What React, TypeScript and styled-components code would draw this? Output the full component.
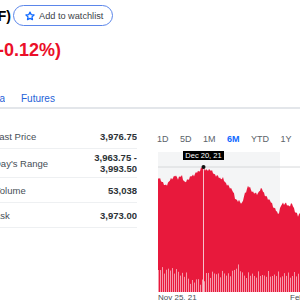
import React from "react";
import styled, { createGlobalStyle } from "styled-components";

const GlobalStyle = createGlobalStyle`
  html, body { margin: 0; padding: 0; background: #fff; }
  body { overflow: hidden; font-family: "Liberation Sans", Arial, sans-serif; }
`;

const Page = styled.div`
  width: 300px;
  height: 300px;
  overflow: hidden;
  display: flex;
  flex-direction: column;
`;

const TitleRow = styled.div`
  display: flex;
  align-items: center;
  height: 21px;
  margin-top: 5px;
`;

const ClipRight = styled.div<{ $w: number }>`
  width: ${(p) => p.$w}px;
  overflow: hidden;
  display: flex;
  justify-content: flex-end;
  white-space: nowrap;
  flex-shrink: 0;
`;

const Title = styled.span`
  font-size: 14px;
  font-weight: 700;
  color: #000;
`;

const WatchButton = styled.button`
  margin-left: 2px;
  width: 100px;
  height: 21px;
  border: 1px solid #5b86ea;
  border-radius: 11px;
  background: #fff;
  display: flex;
  align-items: center;
  padding: 0 0 0 11px;
  gap: 4px;
  font-family: "Liberation Sans", Arial, sans-serif;
  font-size: 9.2px;
  color: #3a4148;
  cursor: pointer;
`;

const PriceRow = styled.div`
  display: flex;
  margin-top: 12px;
  height: 24px;
  align-items: center;
`;

const Change = styled.span`
  font-size: 18px;
  font-weight: 700;
  color: #eb0f29;
`;

const TabsRow = styled.div`
  display: flex;
  align-items: center;
  margin-top: 29px;
  height: 14px;
  gap: 16px;
  padding-bottom: 2px;
  border-bottom: 2px solid #e3e6ea;
`;

const Tab = styled.span`
  font-size: 10px;
  color: #1f62d8;
`;

const Body = styled.div`
  display: flex;
  margin-top: 15px;
`;

const Table = styled.div`
  width: 137px;
  display: flex;
  flex-direction: column;
  flex-shrink: 0;
`;

const Row = styled.div<{ $h: number }>`
  display: flex;
  align-items: center;
  justify-content: space-between;
  height: ${(p) => p.$h}px;
  border-bottom: 1px solid #eef0f2;
  overflow: hidden;
`;

const Label = styled.span`
  margin-left: -6px;
  font-size: 9.5px;
  color: #464e56;
  white-space: nowrap;
`;

const Value = styled.span`
  font-size: 9.5px;
  font-weight: 700;
  color: #2c3236;
  text-align: right;
  line-height: 11px;
  white-space: nowrap;
`;

const ChartCol = styled.div`
  margin-left: 21px;
  width: 142px;
  display: flex;
  flex-direction: column;
  flex-shrink: 0;
`;

const Ranges = styled.div`
  display: flex;
  gap: 11.5px;
  height: 22px;
  margin-top: 4px;
  align-items: center;
  margin-left: -1px;
`;

const RangeBtn = styled.span<{ $active?: boolean }>`
  font-size: 9px;
  color: ${(p) => (p.$active ? "#0f69ff" : "#5b636a")};
  font-weight: ${(p) => (p.$active ? 700 : 400)};
  white-space: nowrap;
`;

const ChartSvg = styled.svg`
  display: block;
  overflow: hidden;
`;

const StarIcon = () => (
  <svg width="10" height="10" viewBox="0 0 24 24">
    <path
      d="M12 2.5l2.9 6.2 6.8.8-5 4.7 1.3 6.7L12 17.6 6 20.9l1.3-6.7-5-4.7 6.8-.8z"
      fill="none"
      stroke="#0f69ff"
      strokeWidth="3"
      strokeLinejoin="round"
    />
  </svg>
);

const ctrl: [number, number][] = [
  [0, 28], [4, 31], [7, 36], [10, 33], [14, 28], [17, 26], [20, 28], [24, 26],
  [27, 33], [30, 29], [34, 26], [37, 24], [42, 20], [45, 17], [49, 21], [52, 19],
  [55, 23], [59, 26], [62, 28], [65, 29], [70, 36], [74, 39], [77, 48], [80, 51],
  [84, 53], [87, 44], [90, 36], [94, 41], [97, 44], [100, 43], [104, 38], [107, 46],
  [110, 48], [114, 54], [117, 59], [120, 64], [124, 54], [127, 53], [130, 56],
  [134, 54], [137, 61], [140, 66], [142, 63],
];

function areaPath(): string {
  const pts: string[] = [];
  for (let i = 0; i < ctrl.length - 1; i++) {
    const [x0, y0] = ctrl[i];
    const [x1, y1] = ctrl[i + 1];
    for (let x = x0; x < x1; x++) {
      const t = (x - x0) / (x1 - x0);
      let y = y0 + (y1 - y0) * t;
      if (x !== 45) y += Math.sin(x * 2.3) * 1.2 + Math.sin(x * 5.1) * 0.7;
      pts.push(`${x},${y.toFixed(1)}`);
    }
  }
  pts.push(`142,63`);
  return `M0,142 L${pts.join(" L")} L142,142 Z`;
}

function volHeight(x: number): number {
  let base = 18;
  if (x < 20) base = 22;
  else if (x < 30) base = 18;
  else if (x < 48) base = 11;
  else if (x < 74) base = 18;
  else if (x < 84) base = 18 + (5 - Math.abs(x - 79)) * 2;
  else base = 17;
  return Math.max(4, base + Math.sin(x * 1.9) * 2.5 + Math.sin(x * 0.7) * 1.5);
}

const bars = Array.from({ length: 71 }, (_, i) => i * 2);

const Chart = () => (
  <ChartSvg width="142" height="150" viewBox="0 0 142 150">
    <rect x="0" y="2" width="122" height="140" fill="#f4f5f6" />
    <line x1="0" y1="17" x2="142" y2="17" stroke="#d6d8da" strokeWidth="1" />
    <path d={areaPath()} fill="#e8193c" />
    {bars.map((x) => {
      const h = volHeight(x);
      return (
        <rect key={x} x={x} y={142 - h} width="1" height={h} fill="#f59aab" />
      );
    })}
    <line x1="45.5" y1="17" x2="45.5" y2="142" stroke="#f6c3cb" strokeWidth="1" />
    <circle cx="45.5" cy="17" r="2" fill="#111" />
    <rect x="25" y="1" width="41" height="9" fill="#000" />
    <text x="45.5" y="8" fontSize="7.5" fill="#fff" textAnchor="middle" fontFamily="Liberation Sans, Arial, sans-serif">
      Dec 20, 21
    </text>
    <text x="0" y="150" fontSize="8" fill="#464e56" fontFamily="Liberation Sans, Arial, sans-serif">
      Nov 25, 21
    </text>
    <text x="132" y="150" fontSize="8" fill="#464e56" fontFamily="Liberation Sans, Arial, sans-serif">
      Feb 2, 22
    </text>
  </ChartSvg>
);

export default function App() {
  return (
    <>
      <GlobalStyle />
      <Page>
        <TitleRow>
          <ClipRight $w={11}>
            <Title>E-Mini S&amp;P 500 Mar 22 (ES=F)</Title>
          </ClipRight>
          <WatchButton>
            <StarIcon />
            Add to watchlist
          </WatchButton>
        </TitleRow>
        <PriceRow>
          <ClipRight $w={61}>
            <Change>3,976.75 -4.75 (-0.12%)</Change>
          </ClipRight>
        </PriceRow>
        <TabsRow>
          <ClipRight $w={5}>
            <Tab>Historical Data</Tab>
          </ClipRight>
          <Tab>Futures</Tab>
        </TabsRow>
        <Body>
          <Table>
            <Row $h={24}>
              <Label>Last Price</Label>
              <Value>3,976.75</Value>
            </Row>
            <Row $h={28}>
              <Label>Day's Range</Label>
              <Value>
                3,963.75 -<br />
                3,993.50
              </Value>
            </Row>
            <Row $h={24}>
              <Label>Volume</Label>
              <Value>53,038</Value>
            </Row>
            <Row $h={24}>
              <Label>Ask</Label>
              <Value>3,973.00</Value>
            </Row>
          </Table>
          <ChartCol>
            <Ranges>
              <RangeBtn>1D</RangeBtn>
              <RangeBtn>5D</RangeBtn>
              <RangeBtn>1M</RangeBtn>
              <RangeBtn $active>6M</RangeBtn>
              <RangeBtn>YTD</RangeBtn>
              <RangeBtn>1Y</RangeBtn>
            </Ranges>
            <Chart />
          </ChartCol>
        </Body>
      </Page>
    </>
  );
}
